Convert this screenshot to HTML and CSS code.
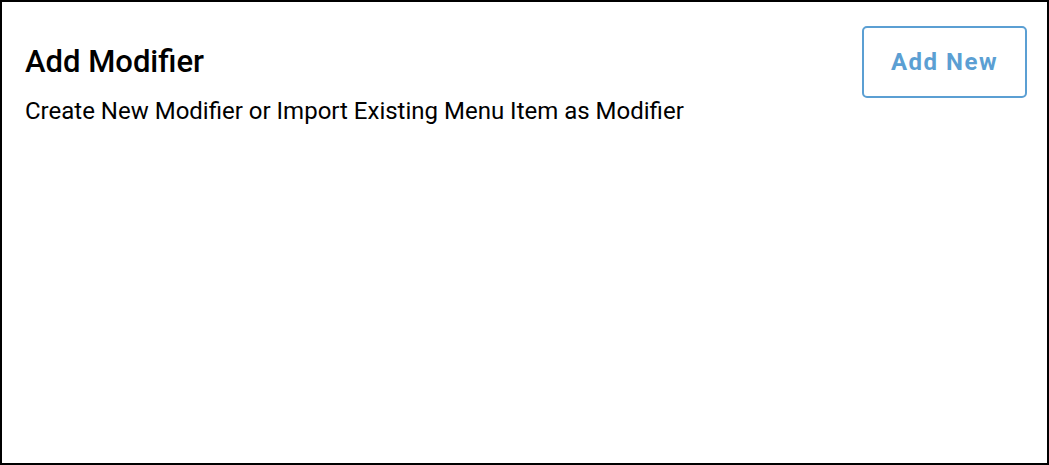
FILE: index.html
```html
<!DOCTYPE html>
<html lang="en">
  <head>
    <meta charset="utf-8" />
    <meta name="viewport" content="width=device-width,initial-scale=1" />
    <title>Add Modifier</title>
    <link rel="stylesheet" href="styles.css">
  </head>
  <body>
    <div class="panel">
      <!-- ヘッダー -->
      <div class="panel-header">
        <div class="panel-text">
          <h2 class="panel-title">Add Modifier</h2>
          <p class="panel-subtitle">Create New Modifier or Import Existing Menu Item as Modifier</p>
        </div>
        <button class="add-button">Add New</button>
      </div>
    </div>
  </body>
</html>
```

FILE: styles.css
```css
html, body {
  margin: 0;
  padding: 0;
}
body {
  font-family: Roboto, "Liberation Sans", sans-serif;
  color: #000;
  background: #fff;
}
.panel {
  box-sizing: border-box;
  width: 1049px;
  height: 465px;
  border: 2px solid #000;
  padding: 24px 20px 0 23px;
}
.panel-header {
  display: flex;
  justify-content: space-between;
  align-items: flex-start;
}
.panel-title {
  margin: 18px 0 0 0;
  font-size: 31px;
  font-weight: 500;
  line-height: 36px;
}
.panel-subtitle {
  margin: 17px 0 0 0;
  font-size: 24px;
  line-height: 28px;
}
.add-button {
  width: 165px;
  height: 72px;
  background: #fff;
  border: 2px solid #5b9fd3;
  border-radius: 5px;
  color: #5b9fd3;
  font-family: Roboto, "Liberation Sans", sans-serif;
  font-size: 24px;
  font-weight: 700;
  letter-spacing: 1.5px;
  cursor: pointer;
}
```
